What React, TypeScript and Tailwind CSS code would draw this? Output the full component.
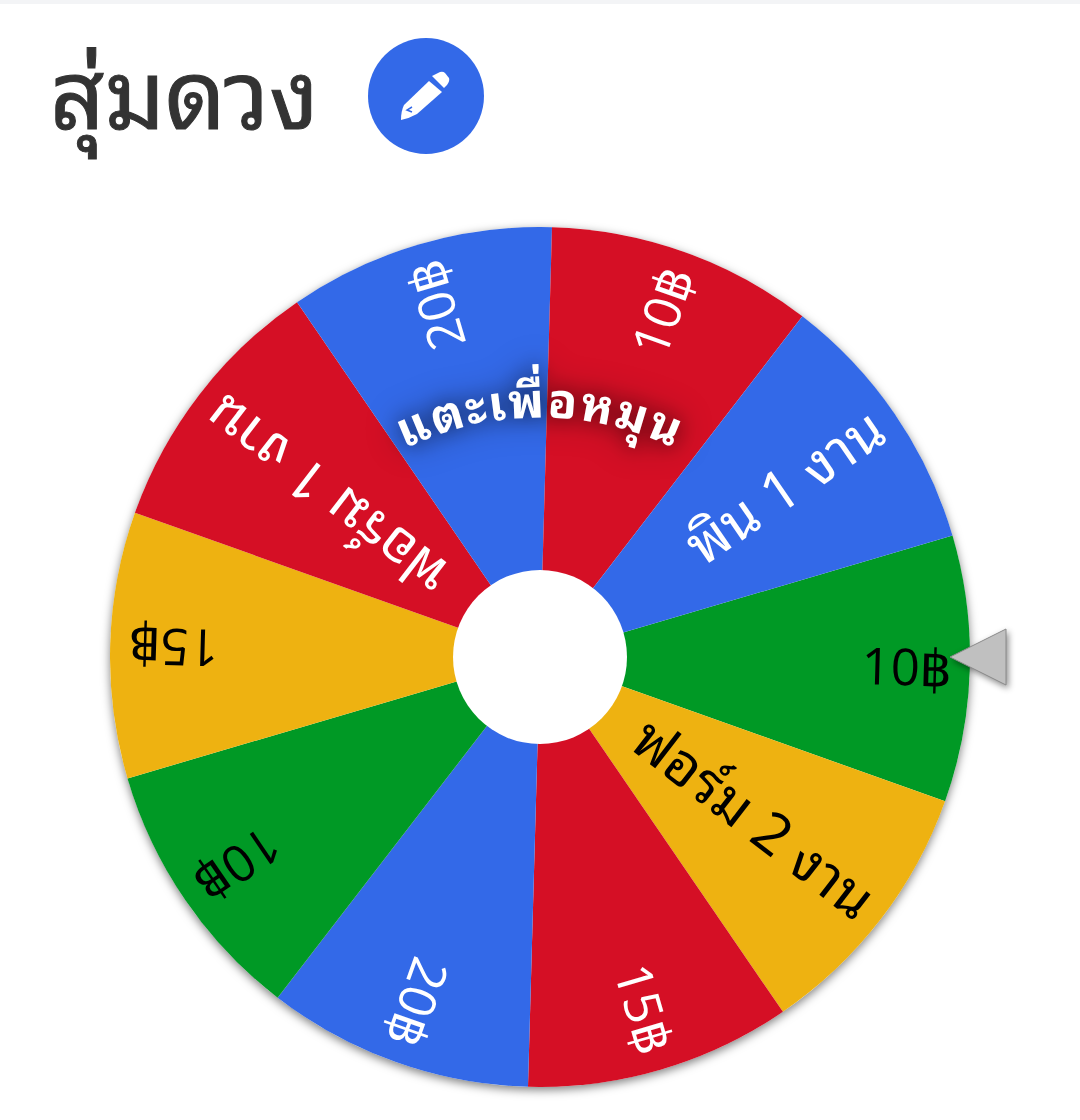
const slices = [
  { color: "#009925", label: "10฿", text: "#000000", size: 51, thai: false },
  { color: "#eeb211", label: "ฟอร์ม 2 งาน", text: "#000000", size: 57, thai: true },
  { color: "#d50f25", label: "15฿", text: "#ffffff", size: 51, thai: false },
  { color: "#3369e8", label: "20฿", text: "#ffffff", size: 51, thai: false },
  { color: "#009925", label: "10฿", text: "#000000", size: 51, thai: false },
  { color: "#eeb211", label: "15฿", text: "#000000", size: 51, thai: false },
  { color: "#d50f25", label: "ฟอร์ม 1 งาน", text: "#ffffff", size: 57, thai: true },
  { color: "#3369e8", label: "20฿", text: "#ffffff", size: 51, thai: false },
  { color: "#d50f25", label: "10฿", text: "#ffffff", size: 51, thai: false },
  { color: "#3369e8", label: "พิน 1 งาน", text: "#ffffff", size: 57, thai: true },
];

const START = -16.4;
const R = 430;

const point = (deg: number, r: number) => {
  const a = (deg * Math.PI) / 180;
  return `${(R + r * Math.cos(a)).toFixed(2)} ${(R + r * Math.sin(a)).toFixed(2)}`;
};

const Wheel = () => (
  <svg width="860" height="860" viewBox="0 0 860 860" className="block">
    <defs>
      <path id="spin-arc" d="M 231 263 A 310 310 0 0 1 629 263" />
    </defs>
    {slices.map((s, i) => {
      const a = START + i * 36;
      return (
        <path
          key={i}
          d={`M ${R} ${R} L ${point(a, R)} A ${R} ${R} 0 0 1 ${point(a + 36, R)} Z`}
          fill={s.color}
        />
      );
    })}
    {slices.map((s, i) => {
      const a = START + i * 36 + 18;
      return (
        <text
          key={i}
          x={R + 412}
          y={R + 18}
          textAnchor="end"
          fontSize={s.size}
          fill={s.text}
          className={s.thai ? "font-['Noto_Sans_Thai_Looped',sans-serif]" : "font-['Open_Sans',sans-serif] font-normal"}
          transform={`rotate(${a} ${R} ${R})`}
        >
          {s.label}
        </text>
      );
    })}
    <circle cx={R} cy={R} r="87" fill="#ffffff" />
    <text
      fontSize="48"
      fontWeight="700"
      fill="#ffffff"
      letterSpacing="2"
      textAnchor="middle"
      className="font-['Noto_Sans_Thai_Looped',sans-serif] [filter:drop-shadow(0_0_10px_rgba(0,0,0,0.45))_drop-shadow(0_0_16px_rgba(0,0,0,0.4))]"
    >
      <textPath href="#spin-arc" startOffset="50%">
        แตะเพื่อหมุน
      </textPath>
    </text>
  </svg>
);

export default function App() {
  return (
    <div className="w-[1080px] h-[1120px] bg-white overflow-hidden font-['Noto_Sans_Thai_Looped',sans-serif]">
      <div className="h-1 bg-gray-100" />
      <div className="flex items-center pl-[50px] pt-[34px] gap-[50px]">
        <h1 className="text-[95px] leading-[96px] h-[116px] font-normal text-[#333333] [-webkit-text-stroke:1px_#333333]">สุ่มดวง</h1>
        <button className="w-[116px] h-[116px] rounded-full bg-[#3369e8] flex items-center justify-center">
          <svg width="116" height="116" viewBox="0 0 116 116">
            <path d="M64 38 L72 34 Q75 33 77 35 L81 40 Q82 43 79 47 L76 50 Z" fill="#ffffff" />
            <path d="M61 43 L74 54 L49 76 Q42 80 33 82 Q33 73 36 67 Z" fill="#ffffff" />
            <path d="M44 69 L39 72 L44 74" fill="none" stroke="#3369e8" strokeWidth="1.5" />
          </svg>
        </button>
      </div>
      <div className="relative w-[860px] h-[860px] ml-[110px] mt-[73px] rounded-full shadow-[0_3px_10px_rgba(0,0,0,0.5)]">
        <Wheel />
        <svg width="70" height="70" viewBox="0 0 70 70" className="absolute left-[838px] top-[395px] drop-shadow-[2px_3px_3px_rgba(0,0,0,0.45)]">
          <polygon points="2,35 58,7 58,63" fill="#c0c0c0" stroke="#8a8a8a" strokeWidth="1" />
        </svg>
      </div>
    </div>
  );
}
